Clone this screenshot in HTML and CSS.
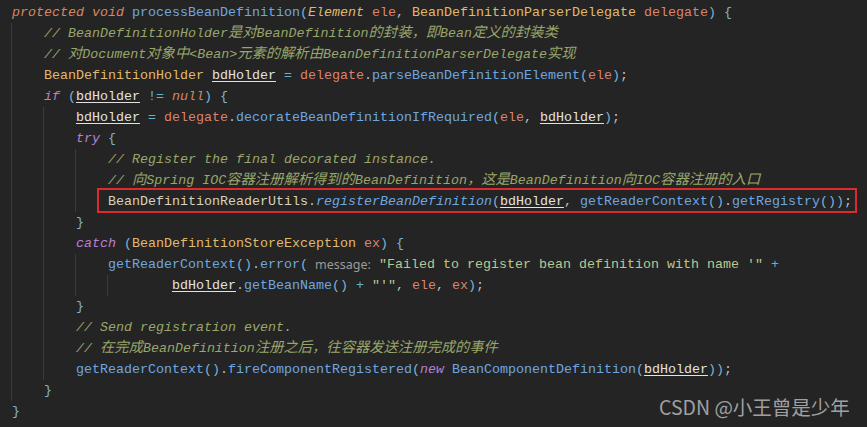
FILE: index.html
```html
<!DOCTYPE html>
<html>
<head>
<meta charset="utf-8">
<link rel="stylesheet" href="styles.css">
</head>
<body>
<div class="code">
<div class="ln"><span class="kw">protected void </span><span class="fn">processBeanDefinition</span><span class="br">(</span><span class="ti">Element </span><span class="pa">ele</span><span class="pu">, </span><span class="ty">BeanDefinitionParserDelegate </span><span class="pa">delegate</span><span class="br">) {</span></div>
<div class="ln"><span class="i g"></span><span class="cm">// BeanDefinitionHolder<span class="zh">是对</span>BeanDefinition<span class="zh">的封装，即</span>Bean<span class="zh">定义的封装类</span></span></div>
<div class="ln"><span class="i g"></span><span class="cm">// <span class="zh">对</span>Document<span class="zh">对象中</span>&lt;Bean&gt;<span class="zh">元素的解析由</span>BeanDefinitionParserDelegate<span class="zh">实现</span></span></div>
<div class="ln"><span class="i g"></span><span class="ty">BeanDefinitionHolder </span><span class="lv">bdHolder</span><span class="op"> = </span><span class="pa">delegate</span><span class="pu">.</span><span class="fn">parseBeanDefinitionElement</span><span class="br">(</span><span class="pa">ele</span><span class="br">)</span><span class="pu">;</span></div>
<div class="ln"><span class="i g"></span><span class="kp">if </span><span class="br">(</span><span class="lv">bdHolder</span><span class="op"> != </span><span class="nu">null</span><span class="br">) {</span></div>
<div class="ln"><span class="i g"></span><span class="i g"></span><span class="lv">bdHolder</span><span class="op"> = </span><span class="pa">delegate</span><span class="pu">.</span><span class="fn">decorateBeanDefinitionIfRequired</span><span class="br">(</span><span class="pa">ele</span><span class="pu">, </span><span class="lv">bdHolder</span><span class="br">)</span><span class="pu">;</span></div>
<div class="ln"><span class="i g"></span><span class="i g"></span><span class="kp">try </span><span class="br">{</span></div>
<div class="ln"><span class="i g"></span><span class="i g"></span><span class="i g"></span><span class="cm">// Register the final decorated instance.</span></div>
<div class="ln"><span class="i g"></span><span class="i g"></span><span class="i g"></span><span class="cm">// <span class="zh">向</span>Spring IOC<span class="zh">容器注册解析得到的</span>BeanDefinition<span class="zh">，这是</span>BeanDefinition<span class="zh">向</span>IOC<span class="zh">容器注册的入口</span></span></div>
<div class="ln"><span class="i g"></span><span class="i g"></span><span class="i g"></span><span class="hl"><span class="ut">BeanDefinitionReaderUtils</span><span class="pu">.</span><span class="fs">registerBeanDefinition</span><span class="br">(</span><span class="lv">bdHolder</span><span class="pu">, </span><span class="fn">getReaderContext</span><span class="br">()</span><span class="pu">.</span><span class="fn">getRegistry</span><span class="br">())</span><span class="pu">;</span></span></div>
<div class="ln"><span class="i g"></span><span class="i g"></span><span class="br">}</span></div>
<div class="ln"><span class="i g"></span><span class="i g"></span><span class="kp">catch </span><span class="br">(</span><span class="ty">BeanDefinitionStoreException </span><span class="pa">ex</span><span class="br">) {</span></div>
<div class="ln"><span class="i g"></span><span class="i g"></span><span class="i g"></span><span class="fn">getReaderContext</span><span class="br">()</span><span class="pu">.</span><span class="fn">error</span><span class="br">(</span><span class="hint">message:</span><span class="st">"Failed to register bean definition with name '"</span><span class="op"> +</span></div>
<div class="ln"><span class="i g"></span><span class="i g"></span><span class="i g"></span><span class="i g"></span><span class="i"></span><span class="lv">bdHolder</span><span class="pu">.</span><span class="fn">getBeanName</span><span class="br">()</span><span class="op"> + </span><span class="st">"'"</span><span class="pu">, </span><span class="pa">ele</span><span class="pu">, </span><span class="pa">ex</span><span class="br">)</span><span class="pu">;</span></div>
<div class="ln"><span class="i g"></span><span class="i g"></span><span class="br">}</span></div>
<div class="ln"><span class="i g"></span><span class="i g"></span><span class="cm">// Send registration event.</span></div>
<div class="ln"><span class="i g"></span><span class="i g"></span><span class="cm">// <span class="zh">在完成</span>BeanDefinition<span class="zh">注册之后，往容器发送注册完成的事件</span></span></div>
<div class="ln"><span class="i g"></span><span class="i g"></span><span class="fn">getReaderContext</span><span class="br">()</span><span class="pu">.</span><span class="fn">fireComponentRegistered</span><span class="br">(</span><span class="kp">new </span><span class="fn">BeanComponentDefinition</span><span class="br">(</span><span class="lv">bdHolder</span><span class="br">))</span><span class="pu">;</span></div>
<div class="ln"><span class="i g"></span><span class="br">}</span></div>
<div class="ln"><span class="br">}</span></div>
</div>
<div class="wm">CSDN @小王曾是少年</div>
</body>
</html>
```
FILE: styles.css
```css
html, body {
  margin: 0;
  padding: 0;
  background: #242424;
  width: 867px;
  height: 427px;
  overflow: hidden;
}
.code {
  padding: 2px 0 0 12px;
  font-family: "Liberation Mono", "Noto Sans CJK SC", monospace;
  font-size: 13.33px;
  color: #b9bfca;
}
.ln {
  height: 21px;
  line-height: 21px;
  white-space: pre;
}
.i {
  display: inline-block;
  width: 32px;
  height: 21px;
  vertical-align: top;
}
.i.g {
  box-shadow: inset 1px 0 0 #3a3a3a;
  margin-left: -1px;
  padding-left: 1px;
}
.zh {
  font-family: "Noto Sans CJK SC", sans-serif;
  font-size: 14.3px;
  line-height: 15px;
}
.kw { color: #d6875f; font-style: italic; }
.kp { color: #b87fd3; font-style: italic; }
.fn { color: #6ea7e0; }
.fs { color: #6ea7e0; font-style: italic; }
.ty { color: #e0b96f; }
.ti { color: #e0b96f; font-style: italic; }
.ut { color: #d8d2bd; }
.pa { color: #dc826c; }
.lv { color: #e2e2e2; text-decoration: underline; text-underline-offset: 2px; }
.op { color: #5fb4c8; }
.br { color: #7fb3d4; }
.pu { color: #b9bfca; }
.cm { color: #98a66a; font-style: italic; }
.st { color: #b9c98c; }
.nu { color: #d6875f; font-style: italic; }
.hint {
  display: inline-block;
  width: 64px;
  padding-left: 7px;
  font-family: "Noto Sans", sans-serif;
  font-size: 12.5px;
  color: #9a9a9a;
  vertical-align: top;
}
.hl {
  display: inline-block;
  height: 21px;
  vertical-align: top;
  position: relative;
}
.hl::after {
  content: "";
  position: absolute;
  left: -11px;
  right: -5px;
  top: -3px;
  bottom: -1px;
  border: 2px solid #dc2a2f;
}
.wm {
  position: absolute;
  left: 659px;
  top: 394px;
  font-family: "Noto Sans CJK SC", "Noto Sans", sans-serif;
  font-size: 19.5px;
  line-height: 26px;
  color: #a0a0a0;
}
```
